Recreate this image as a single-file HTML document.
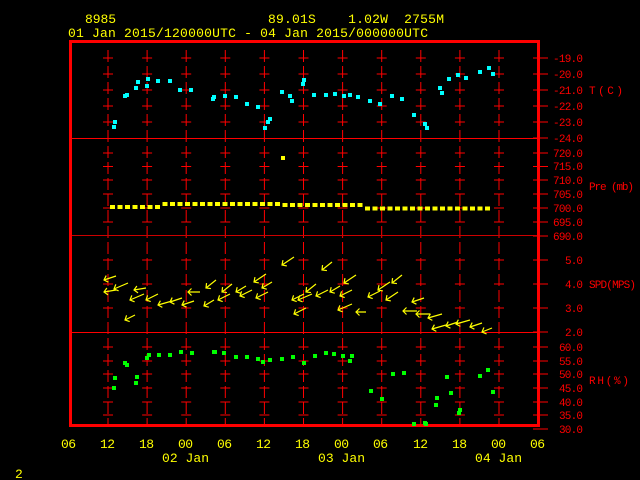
<!DOCTYPE html>
<html><head><meta charset="utf-8"><style>
html,body{margin:0;padding:0;background:#000;width:640px;height:480px;overflow:hidden}
svg{display:block}
text{font-family:"Liberation Mono",monospace}
</style></head><body>
<svg id="s" width="640" height="480" viewBox="0 0 640 480" xmlns="http://www.w3.org/2000/svg">
<rect width="640" height="480" fill="#000"/>
<g fill="#ffff00" font-size="13">
<text x="85" y="23" textLength="31">8985</text>
<text x="268" y="23" textLength="176" xml:space="preserve">89.01S    1.02W  2755M</text>
<text x="68" y="37" textLength="360">01 Jan 2015/120000UTC - 04 Jan 2015/000000UTC</text>
<text x="61" y="448" textLength="15">06</text>
<text x="100" y="448" textLength="15">12</text>
<text x="139" y="448" textLength="15">18</text>
<text x="178" y="448" textLength="15">00</text>
<text x="217" y="448" textLength="15">06</text>
<text x="256" y="448" textLength="15">12</text>
<text x="295" y="448" textLength="15">18</text>
<text x="334" y="448" textLength="15">00</text>
<text x="373" y="448" textLength="15">06</text>
<text x="413" y="448" textLength="15">12</text>
<text x="452" y="448" textLength="15">18</text>
<text x="491" y="448" textLength="15">00</text>
<text x="530" y="448" textLength="15">06</text>
<text x="162" y="462" textLength="47">02 Jan</text>
<text x="318" y="462" textLength="47">03 Jan</text>
<text x="475" y="462" textLength="47">04 Jan</text>
<text x="15" y="478" textLength="7">2</text>
</g>
<g fill="#ff0000" font-size="11">
<text x="553" y="62" textLength="30">-19.0</text>
<text x="553" y="78" textLength="30">-20.0</text>
<text x="553" y="94" textLength="30">-21.0</text>
<text x="553" y="110" textLength="30">-22.0</text>
<text x="553" y="126" textLength="30">-23.0</text>
<text x="553" y="142" textLength="30">-24.0</text>
<text x="589" y="94" textLength="34">T(C)</text>
<text x="553" y="157" textLength="30">720.0</text>
<text x="553" y="170" textLength="30">715.0</text>
<text x="553" y="184" textLength="30">710.0</text>
<text x="553" y="198" textLength="30">705.0</text>
<text x="553" y="212" textLength="30">700.0</text>
<text x="553" y="226" textLength="30">695.0</text>
<text x="553" y="240" textLength="30">690.0</text>
<text x="589" y="190" textLength="45">Pre (mb)</text>
<text x="565" y="264" textLength="18">5.0</text>
<text x="565" y="288" textLength="18">4.0</text>
<text x="565" y="312" textLength="18">3.0</text>
<text x="565" y="336" textLength="18">2.0</text>
<text x="589" y="288" textLength="47">SPD(MPS)</text>
<text x="559" y="351" textLength="24">60.0</text>
<text x="559" y="365" textLength="24">55.0</text>
<text x="559" y="378" textLength="24">50.0</text>
<text x="559" y="392" textLength="24">45.0</text>
<text x="559" y="406" textLength="24">40.0</text>
<text x="559" y="419" textLength="24">35.0</text>
<text x="559" y="433" textLength="24">30.0</text>
<text x="589" y="384" textLength="40">RH(%)</text>
</g>
<g id="g"></g>
</svg>
<script>
var g=document.getElementById('g'),h='';
var ticks=[58,74,90,106,122,153,166.5,180,194,208,222,260,284,308,347,361,374,388,402,415];
var rt=[58,74,90,106,122,138,153,166.5,180,194,208,222,236,260,284,308,332,347,361,374,388,402,415,429];
for(var k=0;k<11;k++){var x=108+39.1*k;
h+='<line x1="'+x+'" y1="50" x2="'+x+'" y2="424" stroke="#f00" stroke-width="1" stroke-dasharray="12,4"/>';
ticks.forEach(function(y){h+='<line x1="'+(x-5)+'" y1="'+y+'" x2="'+(x+5)+'" y2="'+y+'" stroke="#f00"/>';});}
rt.forEach(function(y){h+='<line x1="533" y1="'+y+'" x2="548" y2="'+y+'" stroke="#f00"/>';});
h+='<line x1="70" y1="138.5" x2="540" y2="138.5" stroke="#f00"/><line x1="70" y1="235.5" x2="540" y2="235.5" stroke="#c00"/><line x1="70" y1="332.5" x2="540" y2="332.5" stroke="#f00"/>';
h+='<rect x="70.5" y="41.5" width="468" height="384" fill="none" stroke="#f00" stroke-width="3"/>';
var c=[[115,122],[114,127],[125,96],[127,95],[138,82],[136,88],[147,86],[148,79],[158,81],[170,81],[180,90],[191,90],[213,99],[214,97],[225,96],[236,97],[247,104],[258,107],[265,128],[268,122],[270,119],[282,92],[290,96],[292,101],[303,84],[304,80],[314,95],[326,95],[335,94],[344,96],[350,95],[358,97],[370,101],[380,104],[392,96],[402,99],[414,115],[425,124],[427,128],[440,88],[442,93],[449,79],[458,75],[466,78],[480,72],[489,68],[493,74]];
c.forEach(function(p){h+='<rect x="'+(p[0]-2)+'" y="'+(p[1]-2)+'" width="4" height="4" fill="#00ffff"/>';});
h+='<rect x="281" y="156" width="4" height="4" fill="#ffff00"/>';
for(var x=112;x<=494;x+=7.5){var y=x<160?207:(x<280?204:(x<360?205:208.5));h+='<rect x="'+(x-2)+'" y="'+(y-2)+'" width="5" height="4" fill="#ffff00"/>';}
var gr=[[115,378],[114,388],[125,363],[127,365],[137,377],[136,383],[147,358],[149,355],[159,355],[170,355],[181,352],[192,353],[214,352],[215,352],[224,353],[236,357],[247,357],[258,359],[263,362],[270,360],[282,359],[293,357],[304,363],[315,356],[326,353],[334,354],[343,356],[350,361],[352,356],[371,391],[382,399],[393,374],[404,373],[414,424],[425,423],[426,424],[436,405],[437,398],[447,377],[451,393],[460,410],[459,413],[480,376],[488,370],[493,392]];
gr.forEach(function(p){h+='<rect x="'+(p[0]-2)+'" y="'+(p[1]-2)+'" width="4" height="4" fill="#00ff00"/>';});
var a=[[104,280,12,-4],[104,292,12,-2],[114,289,14,-6],[125,320,10,-5],[134,290,12,-2],[130,300,14,-6],[146,300,12,-6],[158,305,14,-4],[170,302,12,-4],[182,305,12,-4],[188,292,12,0],[206,288,10,-8],[204,306,10,-6],[218,300,12,-6],[222,292,10,-8],[236,292,10,-6],[240,296,12,-6],[256,298,12,-6],[254,282,12,-8],[262,288,10,-6],[282,265,12,-8],[292,300,12,-6],[294,314,12,-6],[298,300,14,-6],[306,292,10,-8],[316,296,12,-6],[322,270,10,-8],[330,292,10,-6],[340,296,12,-6],[344,283,12,-8],[338,310,14,-6],[356,312,10,0],[368,297,12,-6],[378,290,12,-8],[386,300,12,-8],[392,283,10,-8],[403,311,14,0],[412,302,12,-4],[416,314,14,0],[428,318,14,-4],[432,329,14,-4],[446,326,12,-4],[456,324,14,-4],[470,327,12,-4],[482,332,10,-4]];
a.forEach(function(q){var x=q[0],y=q[1],dx=q[2],dy=q[3];var L=Math.hypot(dx,dy),ux=dx/L,uy=dy/L;
var b1x=x+5*(ux*0.7-uy*0.7),b1y=y+5*(uy*0.7+ux*0.7),b2x=x+5*(ux*0.7+uy*0.7),b2y=y+5*(uy*0.7-ux*0.7);
h+='<path d="M'+(x+dx)+' '+(y+dy)+'L'+x+' '+y+'M'+b1x+' '+b1y+'L'+x+' '+y+'L'+b2x+' '+b2y+'" stroke="#ffff00" stroke-width="1.2" fill="none"/>';});
g.innerHTML=h;
</script>
</body></html>
